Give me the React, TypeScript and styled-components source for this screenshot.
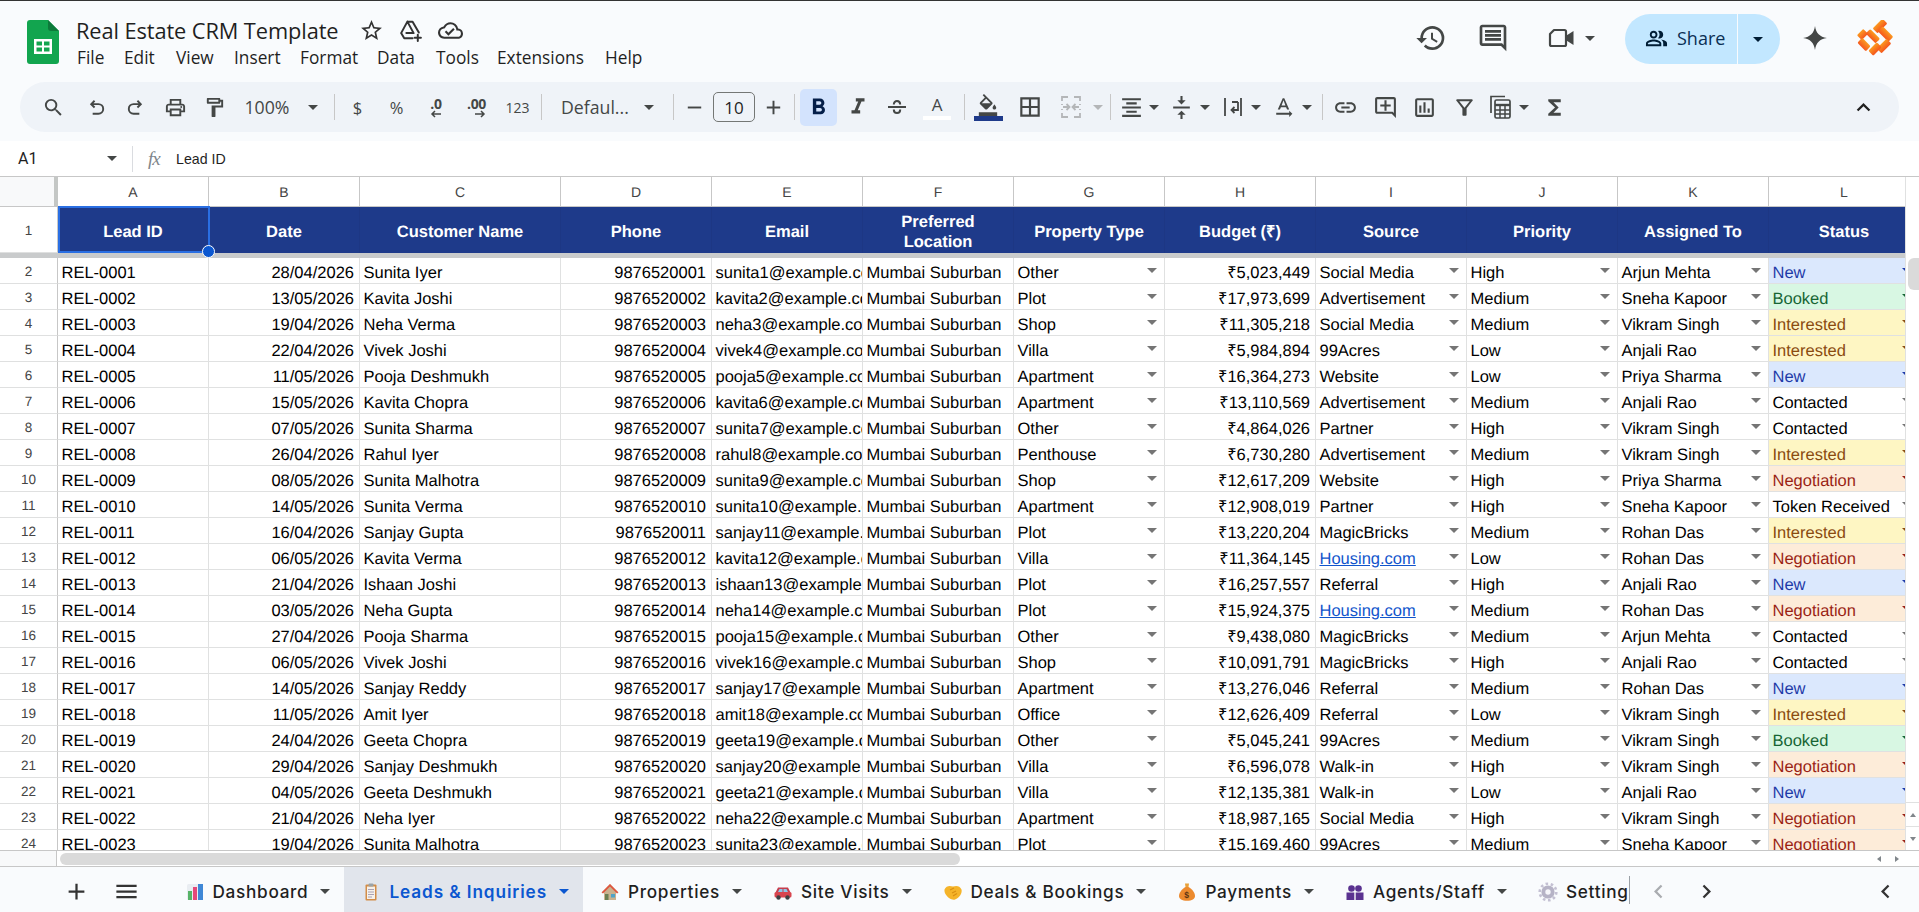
import React from "react";
import styled, { createGlobalStyle } from "styled-components";
import {
  MdSearch, MdOutlinePrint, MdOutlineFormatPaint, MdAdd, MdRemove, MdFormatBold, MdFormatItalic,
  MdOutlineFormatColorFill, MdBorderAll, MdFormatAlignCenter, MdVerticalAlignCenter,
  MdTextRotationNone, MdLink, MdOutlineAddComment, MdOutlineInsertChart, MdOutlineFilterAlt, MdFunctions,
  MdExpandLess, MdHistory, MdOutlineComment, MdOutlinePeopleAlt, MdStarBorder,
  MdOutlineCloudDone, MdMenu, MdChevronLeft, MdChevronRight,
} from "react-icons/md";

const UI = `"Inter", "Open Sans", "Noto Sans", sans-serif`;
const CELL = `"Liberation Sans", Arial, sans-serif`;
const ICON = "#444746";

const Global = createGlobalStyle`
  html, body { margin: 0; padding: 0; background: #f9fbfd; overflow: hidden; }
  * { box-sizing: border-box; }
`;

const Page = styled.div`
  width: 1919px; height: 912px; display: flex; flex-direction: column;
  background: #f9fbfd; border-top: 1px solid #333; font-family: ${UI}; overflow: hidden;
`;
const Header = styled.header`
  height: 81px; flex: none; display: flex; align-items: flex-start; padding: 19px 0 0 27px; position: relative;
`;
const TitleBlock = styled.div` margin-left: 17px; display: flex; flex-direction: column; margin-top: -5px; `;
const TitleRow = styled.div` display: flex; align-items: center; height: 30px; `;
const Title = styled.div`
  font-family: "Open Sans", sans-serif; font-size: 21.8px; color: #1f1f1f; width: 262px; white-space: nowrap; letter-spacing: -0.1px;
`;
const TitleIcon = styled.span<{ $ml: number }>`
  display: flex; margin-left: ${p => p.$ml}px; color: #333; font-size: 25px; width: 25px; justify-content: center;
`;
const Menu = styled.nav` display: flex; margin-left: 1px; height: 24px; align-items: center; `;
const MenuItem = styled.span<{ $w: number }>`
  width: ${p => p.$w}px; font-family: "Open Sans", sans-serif; font-size: 17.3px; color: #1f1f1f; white-space: nowrap;
`;
const Actions = styled.div` margin-left: auto; display: flex; align-items: center; height: 50px; margin-top: -6px; padding-right: 26px; `;
const ActionIcon = styled.span<{ $ml: number; $size?: number }>`
  display: flex; margin-left: ${p => p.$ml}px; margin-top: -2px; color: ${ICON}; font-size: ${p => p.$size ?? 32}px;
`;
const Share = styled.div`
  margin-left: 30px; display: flex; height: 50px; width: 155px; border-radius: 25px; background: #c2e7ff; color: #001d35; overflow: hidden;
`;
const ShareMain = styled.div`
  width: 113px; display: flex; align-items: center; padding: 0 0 2px 20px; gap: 9px; font-size: 18px; font-family: "Open Sans", sans-serif; font-weight: 500; color: #0a2f54; border-right: 1px solid #f9fbfd;
`;
const ShareCaret = styled.div` flex: 1; display: flex; align-items: center; justify-content: center; padding-right: 2px; `;
const Caret = styled.span<{ $c?: string; $s?: number }>`
  display: inline-block; width: 0; height: 0; flex: none;
  border-left: ${p => p.$s ?? 5}px solid transparent; border-right: ${p => p.$s ?? 5}px solid transparent;
  border-top: ${p => p.$s ?? 5}px solid ${p => p.$c ?? ICON};
`;

const Toolbar = styled.div`
  height: 50px; flex: none; margin: 0 20px; width: 1879px; border-radius: 25px; background: #eff3f8; display: flex; align-items: center; padding: 0 14.5px 0 13.5px;
`;
const Slot = styled.div<{ $w?: number; $ml?: number; $on?: boolean; $muted?: boolean }>`
  flex: none; width: ${p => p.$w ?? 39}px; margin-left: ${p => p.$ml ?? 0}px; height: 37px; display: flex; align-items: center; justify-content: center;
  color: ${p => p.$on ? "#041e49" : p.$muted ? "#b4b6b8" : ICON}; font-size: 23px; border-radius: 5px; background: ${p => p.$on ? "#d3e3fd" : "transparent"}; position: relative;
`;
const Sep = styled.div<{ $ml: number }>` flex: none; width: 1px; height: 26px; background: #c7c7c7; margin-left: ${p => p.$ml}px; `;
const SlotText = styled.span<{ $size?: number }>`
  font-family: "Open Sans", sans-serif; font-size: ${p => p.$size ?? 16.5}px; color: ${ICON}; white-space: nowrap;
`;
const LabelBox = styled.div<{ $w: number; $ml: number }>`
  flex: none; width: ${p => p.$w}px; margin-left: ${p => p.$ml}px; font-family: "Open Sans", sans-serif; font-size: 17.7px; color: ${ICON}; white-space: nowrap;
`;
const SizeBox = styled.div`
  flex: none; width: 42px; height: 30px; margin-left: 4px; border: 1px solid #747775; border-radius: 5px; display: flex; align-items: center; justify-content: center; font-family: "Open Sans", sans-serif; font-size: 17px; color: #1f1f1f;
`;
const StackIcon = styled.div` display: flex; flex-direction: column; align-items: center; line-height: 1; `;
const DecText = styled.span` font-family: "Open Sans", sans-serif; font-weight: 700; font-size: 14px; color: ${ICON}; line-height: 13px; letter-spacing: -0.3px; `;
const ArrowLine = styled.svg` display: block; width: 12px; height: 8px; align-self: flex-end; `;
const ColorBar = styled.span<{ $c: string; $h: number; $w: number }>` display: block; width: ${p => p.$w}px; height: ${p => p.$h}px; background: ${p => p.$c}; `;
const AGlyph = styled.span` font-family: "Open Sans", sans-serif; font-size: 17px; line-height: 22px; color: ${ICON}; `;

const Formula = styled.div`
  height: 36px; margin-top: 9px; flex: none; background: #fff; display: flex; align-items: center; border-bottom: 1px solid #c7c7c7; padding-left: 18px;
`;
const CellName = styled.span` width: 89px; font-family: "Roboto", sans-serif; font-size: 16px; color: #1f1f1f; `;
const FxSep = styled.div` width: 1px; height: 26px; background: #dadce0; margin-left: 15px; `;
const Fx = styled.span` margin-left: 15px; width: 28px; font-family: "Liberation Serif", serif; font-style: italic; font-size: 19px; color: #80868b; letter-spacing: -1px; `;
const FormulaText = styled.span` font-family: ${CELL}; font-size: 14.2px; color: #1f1f1f; `;

const Main = styled.div` height: 673px; flex: none; display: flex; background: #fff; `;
const SheetClip = styled.div` width: 1905px; flex: none; overflow: hidden; `;
const Sheet = styled.div`
  width: 1920px; position: relative; display: grid;
  grid-template-columns: 58px 151px 151px 201px repeat(9, 151px);
  grid-template-rows: 30px 46px 5px repeat(23, 26px);
  font-family: ${CELL}; font-size: 16.5px; color: #000; text-rendering: geometricPrecision;
`;
const Corner = styled.div` background: #f8f9fa; border-right: 4px solid #c4c7c5; border-bottom: 1px solid #c7c7c7; `;
const ColHead = styled.div`
  display: flex; align-items: center; justify-content: center; font-size: 14px; color: #444; border-right: 1px solid #c7c7c7; border-bottom: 1px solid #c7c7c7; background: #fff;
`;
const RowHead = styled.div`
  display: flex; align-items: center; justify-content: center; font-size: 13.5px; color: #444; border-right: 1px solid #c7c7c7; border-bottom: 1px solid #dfe0e0; background: #fff; padding-top: 2px;
`;
const HeadCell = styled.div`
  display: flex; align-items: center; justify-content: center; text-align: center; background: #1e3a8a; color: #fff; font-weight: 700; white-space: pre-line; line-height: 20px; border-right: 1px solid #1d3784; padding-top: 3px;
`;
const Freeze = styled.div` grid-column: 1 / -1; background: #c9cbcc; `;
const Cell = styled.div<{ $bg?: string; $c?: string; $right?: boolean }>`
  position: relative; display: flex; align-items: center; justify-content: ${p => p.$right ? "flex-end" : "flex-start"};
  padding: 4px 5px 0 3.5px; line-height: 20px; overflow: hidden; white-space: nowrap; background: ${p => p.$bg ?? "#fff"}; color: ${p => p.$c ?? "#000"};
  border-right: 1px solid #e0e1e1; border-bottom: 1px solid #e0e1e1;
`;
const CellLink = styled.span` color: #1155cc; text-decoration: underline; `;
const Chip = styled.span<{ $c: string }>`
  position: absolute; right: 7.5px; top: 10px; width: 0; height: 0;
  border-left: 5px solid transparent; border-right: 5px solid transparent; border-top: 5.5px solid ${p => p.$c};
`;
const Selection = styled.div`
  position: absolute; left: 58px; top: 29px; width: 152px; height: 47px; border: 2px solid #2a6fe3; pointer-events: none;
`;
const Handle = styled.div`
  position: absolute; right: -7px; bottom: -7px; width: 13px; height: 13px; border-radius: 50%; background: #0b57d0; border: 1px solid #fff;
`;
const VScroll = styled.div`
  flex: 1; background: #fff; border-left: 1px solid #e0e1e1; display: flex; flex-direction: column; align-items: flex-end; padding-top: 81px;
`;
const VThumb = styled.div` width: 11px; height: 32px; border-radius: 6px 0 0 6px; background: #dadada; `;
const VArrows = styled.div` margin-top: auto; width: 100%; height: 48px; display: flex; flex-direction: column; `;
const VArrow = styled.div` flex: 1; display: flex; align-items: center; justify-content: center; border-top: 1px solid #e0e1e1; `;
const TriUp = styled.span<{ $flip?: boolean }>`
  width: 0; height: 0; border-left: 3px solid transparent; border-right: 3px solid transparent;
  ${p => p.$flip ? "border-top: 4px solid #80868b;" : "border-bottom: 4px solid #80868b;"}
`;
const HScroll = styled.div`
  height: 17px; flex: none; background: #fff; border-top: 1px solid #c7c7c7; border-bottom: 1px solid #c7c7c7; display: flex; align-items: center; position: relative;
`;
const HCorner = styled.div` width: 57px; height: 100%; background: #f8f9fa; border-right: 1px solid #c7c7c7; flex: none; `;
const HThumb = styled.div` margin-left: 3px; width: 900px; height: 12px; border-radius: 6px; background: #dadada; flex: none; `;
const HArrows = styled.div` margin-left: auto; width: 48px; display: flex; flex: none; gap: 14px; padding-left: 6px; align-items: center; `;
const TriSide = styled.span<{ $flip?: boolean }>`
  width: 0; height: 0; border-top: 3px solid transparent; border-bottom: 3px solid transparent;
  ${p => p.$flip ? "border-left: 4px solid #80868b;" : "border-right: 4px solid #80868b;"}
`;
const TabBar = styled.div` flex: 1; display: flex; align-items: stretch; padding-left: 56.5px; background: #f9fbfd; `;
const BarBtn = styled.div<{ $w?: number; $ml?: number; $c?: string }>`
  flex: none; width: ${p => p.$w ?? 40}px; margin-left: ${p => p.$ml ?? 0}px; display: flex; align-items: center; justify-content: center; font-size: 27px; padding-top: 4px; color: ${p => p.$c ?? "#333"};
`;
const TabStrip = styled.div`
  flex: none; width: 1463px; margin-left: 21px; display: flex; overflow: hidden; position: relative;
  &::after { content: ""; position: absolute; right: 0; top: 9px; bottom: 8px; width: 1.5px; background: #9aa0a6; }
`;
const Tab = styled.div<{ $on?: boolean }>`
  flex: none; display: flex; align-items: center; padding: 4px 13.5px 0 17.5px; background: ${p => p.$on ? "#e1e5ec" : "transparent"};
  color: ${p => p.$on ? "#0b57d0" : "#1f1f1f"}; font-weight: ${p => p.$on ? 600 : 500}; font-size: 17.2px; letter-spacing: ${p => p.$on ? 0.9 : 0.7}px; font-family: ${UI};
`;
const TabGlyph = styled.svg` width: 20px; height: 20px; flex: none; margin-right: 8px; display: block; `;
const TabName = styled.span` white-space: nowrap; margin-right: 12px; `;

const Sig = styled.svg<{ $w: number; $h: number }>` width: ${p => p.$w}px; height: ${p => p.$h}px; display: block; flex: none; `;

const cols = ["A","B","C","D","E","F","G","H","I","J","K","L"];
const heads = ["Lead ID","Date","Customer Name","Phone","Email","Preferred\nLocation","Property  Type","Budget (₹)","Source","Priority","Assigned To","Status"];
const raw = `28/04/2026|Sunita Iyer|sunita1|Other|₹5,023,449|Social Media|High|Arjun Mehta|New
13/05/2026|Kavita Joshi|kavita2|Plot|₹17,973,699|Advertisement|Medium|Sneha Kapoor|Booked
19/04/2026|Neha Verma|neha3|Shop|₹11,305,218|Social Media|Medium|Vikram Singh|Interested
22/04/2026|Vivek Joshi|vivek4|Villa|₹5,984,894|99Acres|Low|Anjali Rao|Interested
11/05/2026|Pooja Deshmukh|pooja5|Apartment|₹16,364,273|Website|Low|Priya Sharma|New
15/05/2026|Kavita Chopra|kavita6|Apartment|₹13,110,569|Advertisement|Medium|Anjali Rao|Contacted
07/05/2026|Sunita Sharma|sunita7|Other|₹4,864,026|Partner|High|Vikram Singh|Contacted
26/04/2026|Rahul Iyer|rahul8|Penthouse|₹6,730,280|Advertisement|Medium|Vikram Singh|Interested
08/05/2026|Sunita Malhotra|sunita9|Shop|₹12,617,209|Website|High|Priya Sharma|Negotiation
14/05/2026|Sunita Verma|sunita10|Apartment|₹12,908,019|Partner|High|Sneha Kapoor|Token Received
16/04/2026|Sanjay Gupta|sanjay11|Plot|₹13,220,204|MagicBricks|Medium|Rohan Das|Interested
06/05/2026|Kavita Verma|kavita12|Villa|₹11,364,145|Housing.com|Low|Rohan Das|Negotiation
21/04/2026|Ishaan Joshi|ishaan13|Plot|₹16,257,557|Referral|High|Anjali Rao|New
03/05/2026|Neha Gupta|neha14|Plot|₹15,924,375|Housing.com|Medium|Rohan Das|Negotiation
27/04/2026|Pooja Sharma|pooja15|Other|₹9,438,080|MagicBricks|Medium|Arjun Mehta|Contacted
06/05/2026|Vivek Joshi|vivek16|Shop|₹10,091,791|MagicBricks|High|Anjali Rao|Contacted
14/05/2026|Sanjay Reddy|sanjay17|Apartment|₹13,276,046|Referral|Medium|Rohan Das|New
11/05/2026|Amit Iyer|amit18|Office|₹12,626,409|Referral|Low|Vikram Singh|Interested
24/04/2026|Geeta Chopra|geeta19|Other|₹5,045,241|99Acres|Medium|Vikram Singh|Booked
29/04/2026|Sanjay Deshmukh|sanjay20|Villa|₹6,596,078|Walk-in|High|Vikram Singh|Negotiation
04/05/2026|Geeta Deshmukh|geeta21|Villa|₹12,135,381|Walk-in|Low|Anjali Rao|New
21/04/2026|Neha Iyer|neha22|Apartment|₹18,987,165|Social Media|High|Vikram Singh|Negotiation
19/04/2026|Sunita Malhotra|sunita23|Plot|₹15,169,460|99Acres|Medium|Sneha Kapoor|Negotiation`;
const rows = raw.split("\n").map(l => l.split("|"));

const statusStyle: Record<string, { bg: string; c: string }> = {
  New: { bg: "#dbe8fd", c: "#1e3aa8" },
  Booked: { bg: "#d8f7e3", c: "#166534" },
  Interested: { bg: "#fef6c3", c: "#8a4b10" },
  Negotiation: { bg: "#fdecd9", c: "#9a1f14" },
};

const SheetsLogo = () => (
  <Sig $w={32} $h={44} viewBox="0 0 32 44">
    <path d="M3 0H21L32 11V41a3 3 0 0 1-3 3H3a3 3 0 0 1-3-3V3a3 3 0 0 1 3-3Z" fill="#12a54f" />
    <path d="M21 0L32 11H24a3 3 0 0 1-3-3Z" fill="#0c7a3a" />
    <path d="M7 19H25V34H7ZM9.5 21.5V25.5H15V21.5ZM17 21.5V25.5H22.5V21.5ZM9.5 27.5V31.5H15V27.5ZM17 27.5V31.5H22.5V27.5Z" fill="#fff" fillRule="evenodd" />
  </Sig>
);
const DriveAdd = () => (
  <Sig $w={25} $h={25} viewBox="0 0 24 24" fill="none" stroke="#333" strokeWidth="1.9" strokeLinejoin="round" strokeLinecap="round">
    <path d="M9 3.5H14L20 14M9 3.5L3 14.5L6 19.5H14M9 3.5L15 14.5H8" />
    <path d="M19 16V22M16 19H22" />
  </Sig>
);
const Video = () => (
  <Sig $w={26} $h={20} viewBox="0 0 26 20">
    <path d="M6 2H16.5A1.5 1.5 0 0 1 18 3.5V16.5A1.5 1.5 0 0 1 16.5 18H3.5A1.5 1.5 0 0 1 2 16.5V6Z" fill="none" stroke={ICON} strokeWidth="2.2" strokeLinejoin="round" />
    <path d="M18.5 7.5L25.5 3V17L18.5 12.5Z" fill={ICON} />
  </Sig>
);
const UndoGlyph = ({ flip }: { flip?: boolean }) => (
  <Sig $w={23} $h={23} viewBox="0 0 24 24" fill="none" stroke={ICON} strokeWidth="2" transform={flip ? "scale(-1 1)" : undefined}>
    <path d="M10 5L6.5 8.5L10 12M6.5 8.5H14a5 5 0 0 1 0 10H8" />
  </Sig>
);
const StrikeGlyph = () => (
  <Sig $w={24} $h={24} viewBox="0 0 24 24" fill="none" stroke={ICON} strokeWidth="2">
    <path d="M3 12H21M8.8 9.5C8.8 7.4 10.2 6 12 6s3.2 1.4 3.2 3.5M8.8 14.5C8.8 16.6 10.2 18 12 18s3.2-1.4 3.2-3.5" />
  </Sig>
);
const Spark = () => (
  <Sig $w={26} $h={26} viewBox="0 0 24 24">
    <path d="M12 1C12.9 7.6 16.4 11.1 23 12C16.4 12.9 12.9 16.4 12 23C11.1 16.4 7.6 12.9 1 12C7.6 11.1 11.1 7.6 12 1Z" fill="#444746" />
  </Sig>
);
const BrandMark = () => (
  <Sig $w={36} $h={36} viewBox="0 0 36 36">
    <defs>
      <linearGradient id="bm" x1="0.5" y1="0" x2="0.5" y2="1">
        <stop offset="0" stopColor="#fb9a20" />
        <stop offset="1" stopColor="#f5561d" />
      </linearGradient>
    </defs>
    <g fill="url(#bm)">
      <rect x="16" y="2.5" width="14" height="7" rx="1.5" transform="rotate(-45 23 6)" />
      <rect x="21" y="10.5" width="15" height="7" rx="1.5" transform="rotate(45 28.5 14)" />
      <rect x="1" y="11" width="9" height="7" rx="1.5" transform="rotate(-45 5.5 14.5)" />
      <rect x="9" y="13" width="14" height="6.5" rx="1.5" transform="rotate(45 16 16)" />
      <rect x="1" y="21" width="12" height="7" rx="1.5" transform="rotate(45 7 24.5)" />
      <rect x="20" y="22.5" width="14" height="7" rx="1.5" transform="rotate(-45 27 26)" />
      <rect x="12" y="25.5" width="12" height="7" rx="1.5" transform="rotate(-45 18 29)" />
    </g>
  </Sig>
);
const MergeIcon = () => (
  <Sig $w={20} $h={22} viewBox="0 0 20 22" fill="none" stroke="#b4b6b8" strokeWidth="1.8">
    <path d="M7 1H1V5M1 8V9M1 13V14M1 17V21H7M13 1H19V5M19 8V9M19 13V14M19 17V21H13" />
    <path d="M2 11H8M5.5 8L8.5 11L5.5 14M18 11H12M14.5 8L11.5 11L14.5 14" />
  </Sig>
);
const WrapIcon = () => (
  <Sig $w={20} $h={22} viewBox="0 0 20 22" fill="none" stroke={ICON} strokeWidth="1.8">
    <path d="M2 2V20M18 2V20M15 6H9M15 6V14H9M11.5 11L8.5 14L11.5 17" />
  </Sig>
);
const CalcIcon = () => (
  <Sig $w={21} $h={24} viewBox="0 0 21 24" fill="none" stroke={ICON} strokeWidth="1.7">
    <path d="M1 18V1.5H15" />
    <rect x="5" y="5" width="15" height="18" rx="1.5" />
    <path d="M5 10H20" strokeWidth="2.4" />
    <path d="M5 15H20M5 19H20M10 10V23M15 10V23" strokeWidth="1.5" />
  </Sig>
);
const Icons: Record<string, React.ReactNode> = {
  dash: (<g><rect x="2" y="2" width="16" height="16" rx="1.5" fill="#e9edf2" /><rect x="3" y="9" width="4" height="9" fill="#57b368" /><rect x="8" y="5" width="4" height="13" fill="#e5487a" /><rect x="13" y="2" width="5" height="16" fill="#3f87d6" /></g>),
  leads: (<g><rect x="4.5" y="2.5" width="11" height="16" rx="1" fill="#d38d47" /><rect x="6" y="4.5" width="8" height="12.5" fill="#f6f1ea" /><rect x="7.5" y="1.5" width="5" height="3" rx="1" fill="#9aa3a8" /><path d="M7 7.5H13M7 10H13M7 12.5H13M7 15H11" stroke="#a9a2b5" strokeWidth="1" /></g>),
  prop: (<g><path d="M2 10L10 2L18 10H16V18H4V10Z" fill="#c9b28f" /><path d="M1.5 10.5L10 2L18.5 10.5L17 11.5L10 4.5L3 11.5Z" fill="#e0553f" /><rect x="5" y="12" width="3.5" height="6" fill="#6b7f52" /><rect x="11" y="12" width="4" height="3.5" fill="#4fa3c7" /></g>),
  car: (<g><path d="M5 5.5H15L17.5 10.5H2.5Z" fill="#c63d4d" /><rect x="1.5" y="10" width="17" height="5.5" rx="1.5" fill="#d8454f" /><path d="M6.5 7H9.5V10H5ZM10.5 7H13.5L15 10H10.5Z" fill="#8fc7e8" /><circle cx="5.5" cy="15.5" r="2.2" fill="#3c4043" /><circle cx="14.5" cy="15.5" r="2.2" fill="#3c4043" /></g>),
  deal: (<g><path d="M1.5 7.5C3 3.5 7 3.5 10 4.5C13 3.5 17 3.5 18.5 7.5C19.5 11 16.5 16 12 17.5C10.5 18 8 17.5 6 16C3.5 14 1 11 1.5 7.5Z" fill="#f5b42a" /><path d="M7 8L11 6M9 11L13 9M10 14L14 11.5" stroke="#d98f12" strokeWidth="1.2" fill="none" /></g>),
  pay: (<g><path d="M8 1.5H12L11.5 5H8.5Z" fill="#e8a13a" /><path d="M8.5 5H11.5C15 7 18 10.5 18 14C18 17 15 18.8 10 18.8C5 18.8 2 17 2 14C2 10.5 5 7 8.5 5Z" fill="#ec8a2e" /><text x="10" y="16" fontSize="8.5" fontWeight="700" textAnchor="middle" fill="#5b3413" fontFamily="Liberation Sans">$</text></g>),
  agents: (<g fill="#5a3290"><circle cx="6.5" cy="6.5" r="3.3" /><circle cx="13.5" cy="6.5" r="3.3" /><path d="M1.5 10.5H9.3V18H1.5ZM10.7 10.5H18.5V18H10.7Z" /></g>),
  gear: (<g><circle cx="10" cy="10" r="6.6" fill="#b6b3c6" /><circle cx="10" cy="10" r="8.3" fill="none" stroke="#c4c1d3" strokeWidth="2.6" strokeDasharray="2.6 2.6" /><circle cx="10" cy="10" r="2.7" fill="#f6f6fa" /></g>),
};

const tabs: [string, string, boolean?][] = [
  ["dash", "Dashboard"], ["leads", "Leads & Inquiries", true], ["prop", "Properties"], ["car", "Site Visits"],
  ["deal", "Deals & Bookings"], ["pay", "Payments"], ["agents", "Agents/Staff"], ["gear", "Settings"],
];
const menu: [string, number][] = [["File",47],["Edit",52],["View",58],["Insert",66],["Format",77],["Data",59],["Tools",61],["Extensions",108],["Help",50]];

export default function App() {
  return (
    <Page>
      <Global />
      <Header>
        <SheetsLogo />
        <TitleBlock>
          <TitleRow>
            <Title>Real Estate CRM Template</Title>
            <TitleIcon $ml={21}><MdStarBorder /></TitleIcon>
            <TitleIcon $ml={14}><DriveAdd /></TitleIcon>
            <TitleIcon $ml={15}><MdOutlineCloudDone /></TitleIcon>
          </TitleRow>
          <Menu>{menu.map(([m, w]) => <MenuItem key={m} $w={w}>{m}</MenuItem>)}</Menu>
        </TitleBlock>
        <Actions>
          <ActionIcon $ml={0}><MdHistory /></ActionIcon>
          <ActionIcon $ml={30}><MdOutlineComment /></ActionIcon>
          <ActionIcon $ml={39}><Video /></ActionIcon>
          <ActionIcon $ml={11}><Caret /></ActionIcon>
          <Share>
            <ShareMain><MdOutlinePeopleAlt size={23} color="#001d35" />Share</ShareMain>
            <ShareCaret><Caret $c="#001d35" /></ShareCaret>
          </Share>
          <ActionIcon $ml={22}><Spark /></ActionIcon>
          <ActionIcon $ml={29}><BrandMark /></ActionIcon>
        </Actions>
      </Header>

      <Toolbar>
        <Slot><MdSearch /></Slot>
        <Slot $ml={4}><UndoGlyph /></Slot>
        <Slot><UndoGlyph flip /></Slot>
        <Slot $ml={1}><MdOutlinePrint /></Slot>
        <Slot><MdOutlineFormatPaint /></Slot>
        <LabelBox $ml={11} $w={58}>100%</LabelBox>
        <Slot $w={20}><Caret /></Slot>
        <Sep $ml={11} />
        <Slot $ml={3.5}><SlotText>$</SlotText></Slot>
        <Slot><SlotText>%</SlotText></Slot>
        <Slot $w={38} $ml={1}>
          <StackIcon>
            <DecText>.0</DecText>
            <ArrowLine viewBox="0 0 12 8"><path d="M11 4H2M5 1L2 4L5 7" stroke={ICON} strokeWidth="1.5" fill="none" /></ArrowLine>
          </StackIcon>
        </Slot>
        <Slot $ml={2}>
          <StackIcon>
            <DecText>.00</DecText>
            <ArrowLine viewBox="0 0 12 8"><path d="M1 4H10M7 1L10 4L7 7" stroke={ICON} strokeWidth="1.5" fill="none" /></ArrowLine>
          </StackIcon>
        </Slot>
        <Slot $ml={2}><SlotText $size={14}>123</SlotText></Slot>
        <Sep $ml={4} />
        <LabelBox $ml={19} $w={78}>Defaul...</LabelBox>
        <Slot $w={20}><Caret /></Slot>
        <Sep $ml={14} />
        <Slot $w={30} $ml={5}><MdRemove /></Slot>
        <SizeBox>10</SizeBox>
        <Slot $w={30} $ml={3}><MdAdd /></Slot>
        <Sep $ml={6} />
        <Slot $w={37} $ml={5} $on><MdFormatBold size={27} /></Slot>
        <Slot $ml={1.5}><MdFormatItalic size={26} /></Slot>
        <Slot><StrikeGlyph /></Slot>
        <Slot $ml={1}>
          <StackIcon><AGlyph>A</AGlyph><ColorBar $c="#ffffff" $w={28} $h={4} /></StackIcon>
        </Slot>
        <Sep $ml={7.5} />
        <Slot $ml={3.5}>
          <StackIcon><MdOutlineFormatColorFill size={22} /><ColorBar $c="#1e3a8a" $w={29} $h={5} /></StackIcon>
        </Slot>
        <Slot $ml={3}><MdBorderAll size={26} /></Slot>
        <Slot $ml={2}><MergeIcon /></Slot>
        <Slot $w={14}><Caret $c="#b4b6b8" /></Slot>
        <Sep $ml={5} />
        <Slot $w={30} $ml={6}><MdFormatAlignCenter size={25} /></Slot>
        <Slot $w={14}><Caret /></Slot>
        <Slot $w={30} $ml={6}><MdVerticalAlignCenter size={25} /></Slot>
        <Slot $w={16}><Caret /></Slot>
        <Slot $w={30} $ml={5}><WrapIcon /></Slot>
        <Slot $w={16}><Caret /></Slot>
        <Slot $w={30} $ml={5}><MdTextRotationNone size={25} /></Slot>
        <Slot $w={16}><Caret /></Slot>
        <Sep $ml={7} />
        <Slot $ml={3.5}><MdLink size={25} /></Slot>
        <Slot $ml={1}><MdOutlineAddComment size={25} /></Slot>
        <Slot><MdOutlineInsertChart size={25} /></Slot>
        <Slot $ml={1}><MdOutlineFilterAlt size={25} /></Slot>
        <Slot $w={30} $ml={1.5}><CalcIcon /></Slot>
        <Slot $w={16}><Caret /></Slot>
        <Slot $ml={3.5}><MdFunctions size={25} /></Slot>
        <Slot $ml={270}><MdExpandLess size={27} color="#1f1f1f" /></Slot>
      </Toolbar>

      <Formula>
        <CellName>A1</CellName>
        <Caret />
        <FxSep />
        <Fx>fx</Fx>
        <FormulaText>Lead ID</FormulaText>
      </Formula>

      <Main>
        <SheetClip>
          <Sheet>
            <Corner />
            {cols.map(c => <ColHead key={c}>{c}</ColHead>)}
            <RowHead>1</RowHead>
            {heads.map(h => <HeadCell key={h}>{h}</HeadCell>)}
            <Freeze />
            {rows.map((r, i) => {
              const [date, name, mail, type, budget, source, prio, agent, status] = r;
              const id = `REL-${String(i + 1).padStart(4, "0")}`;
              const st = statusStyle[status];
              return (
                <React.Fragment key={id}>
                  <RowHead>{i + 2}</RowHead>
                  <Cell>{id}</Cell>
                  <Cell $right>{date}</Cell>
                  <Cell>{name}</Cell>
                  <Cell $right>{9876520001 + i}</Cell>
                  <Cell>{mail}@example.com</Cell>
                  <Cell>Mumbai Suburban</Cell>
                  <Cell>{type}<Chip $c="#757575" /></Cell>
                  <Cell $right>{budget}</Cell>
                  <Cell>{source === "Housing.com" ? <CellLink>{source}</CellLink> : source}<Chip $c="#757575" /></Cell>
                  <Cell>{prio}<Chip $c="#757575" /></Cell>
                  <Cell>{agent}<Chip $c="#757575" /></Cell>
                  <Cell $bg={st?.bg} $c={st?.c}>{status}<Chip $c={st?.c ?? "#757575"} /></Cell>
                </React.Fragment>
              );
            })}
            <Selection><Handle /></Selection>
          </Sheet>
        </SheetClip>
        <VScroll>
          <VThumb />
          <VArrows>
            <VArrow><TriUp /></VArrow>
            <VArrow><TriUp $flip /></VArrow>
          </VArrows>
        </VScroll>
      </Main>

      <HScroll>
        <HCorner />
        <HThumb />
        <HArrows><TriSide /><TriSide $flip /></HArrows>
      </HScroll>

      <TabBar>
        <BarBtn><MdAdd /></BarBtn>
        <BarBtn $ml={9.5}><MdMenu /></BarBtn>
        <TabStrip>
          {tabs.map(([ic, name, on]) => (
            <Tab key={name} $on={on}>
              <TabGlyph viewBox="0 0 20 20">{Icons[ic]}</TabGlyph>
              <TabName>{name}</TabName>
              <Caret $c={on ? "#0b57d0" : ICON} />
            </Tab>
          ))}
        </TabStrip>
        <BarBtn $ml={8} $c="#a9acb0"><MdChevronLeft /></BarBtn>
        <BarBtn $ml={8} $c="#333"><MdChevronRight /></BarBtn>
        <BarBtn $ml={139} $c="#333"><MdChevronLeft /></BarBtn>
      </TabBar>
    </Page>
  );
}
